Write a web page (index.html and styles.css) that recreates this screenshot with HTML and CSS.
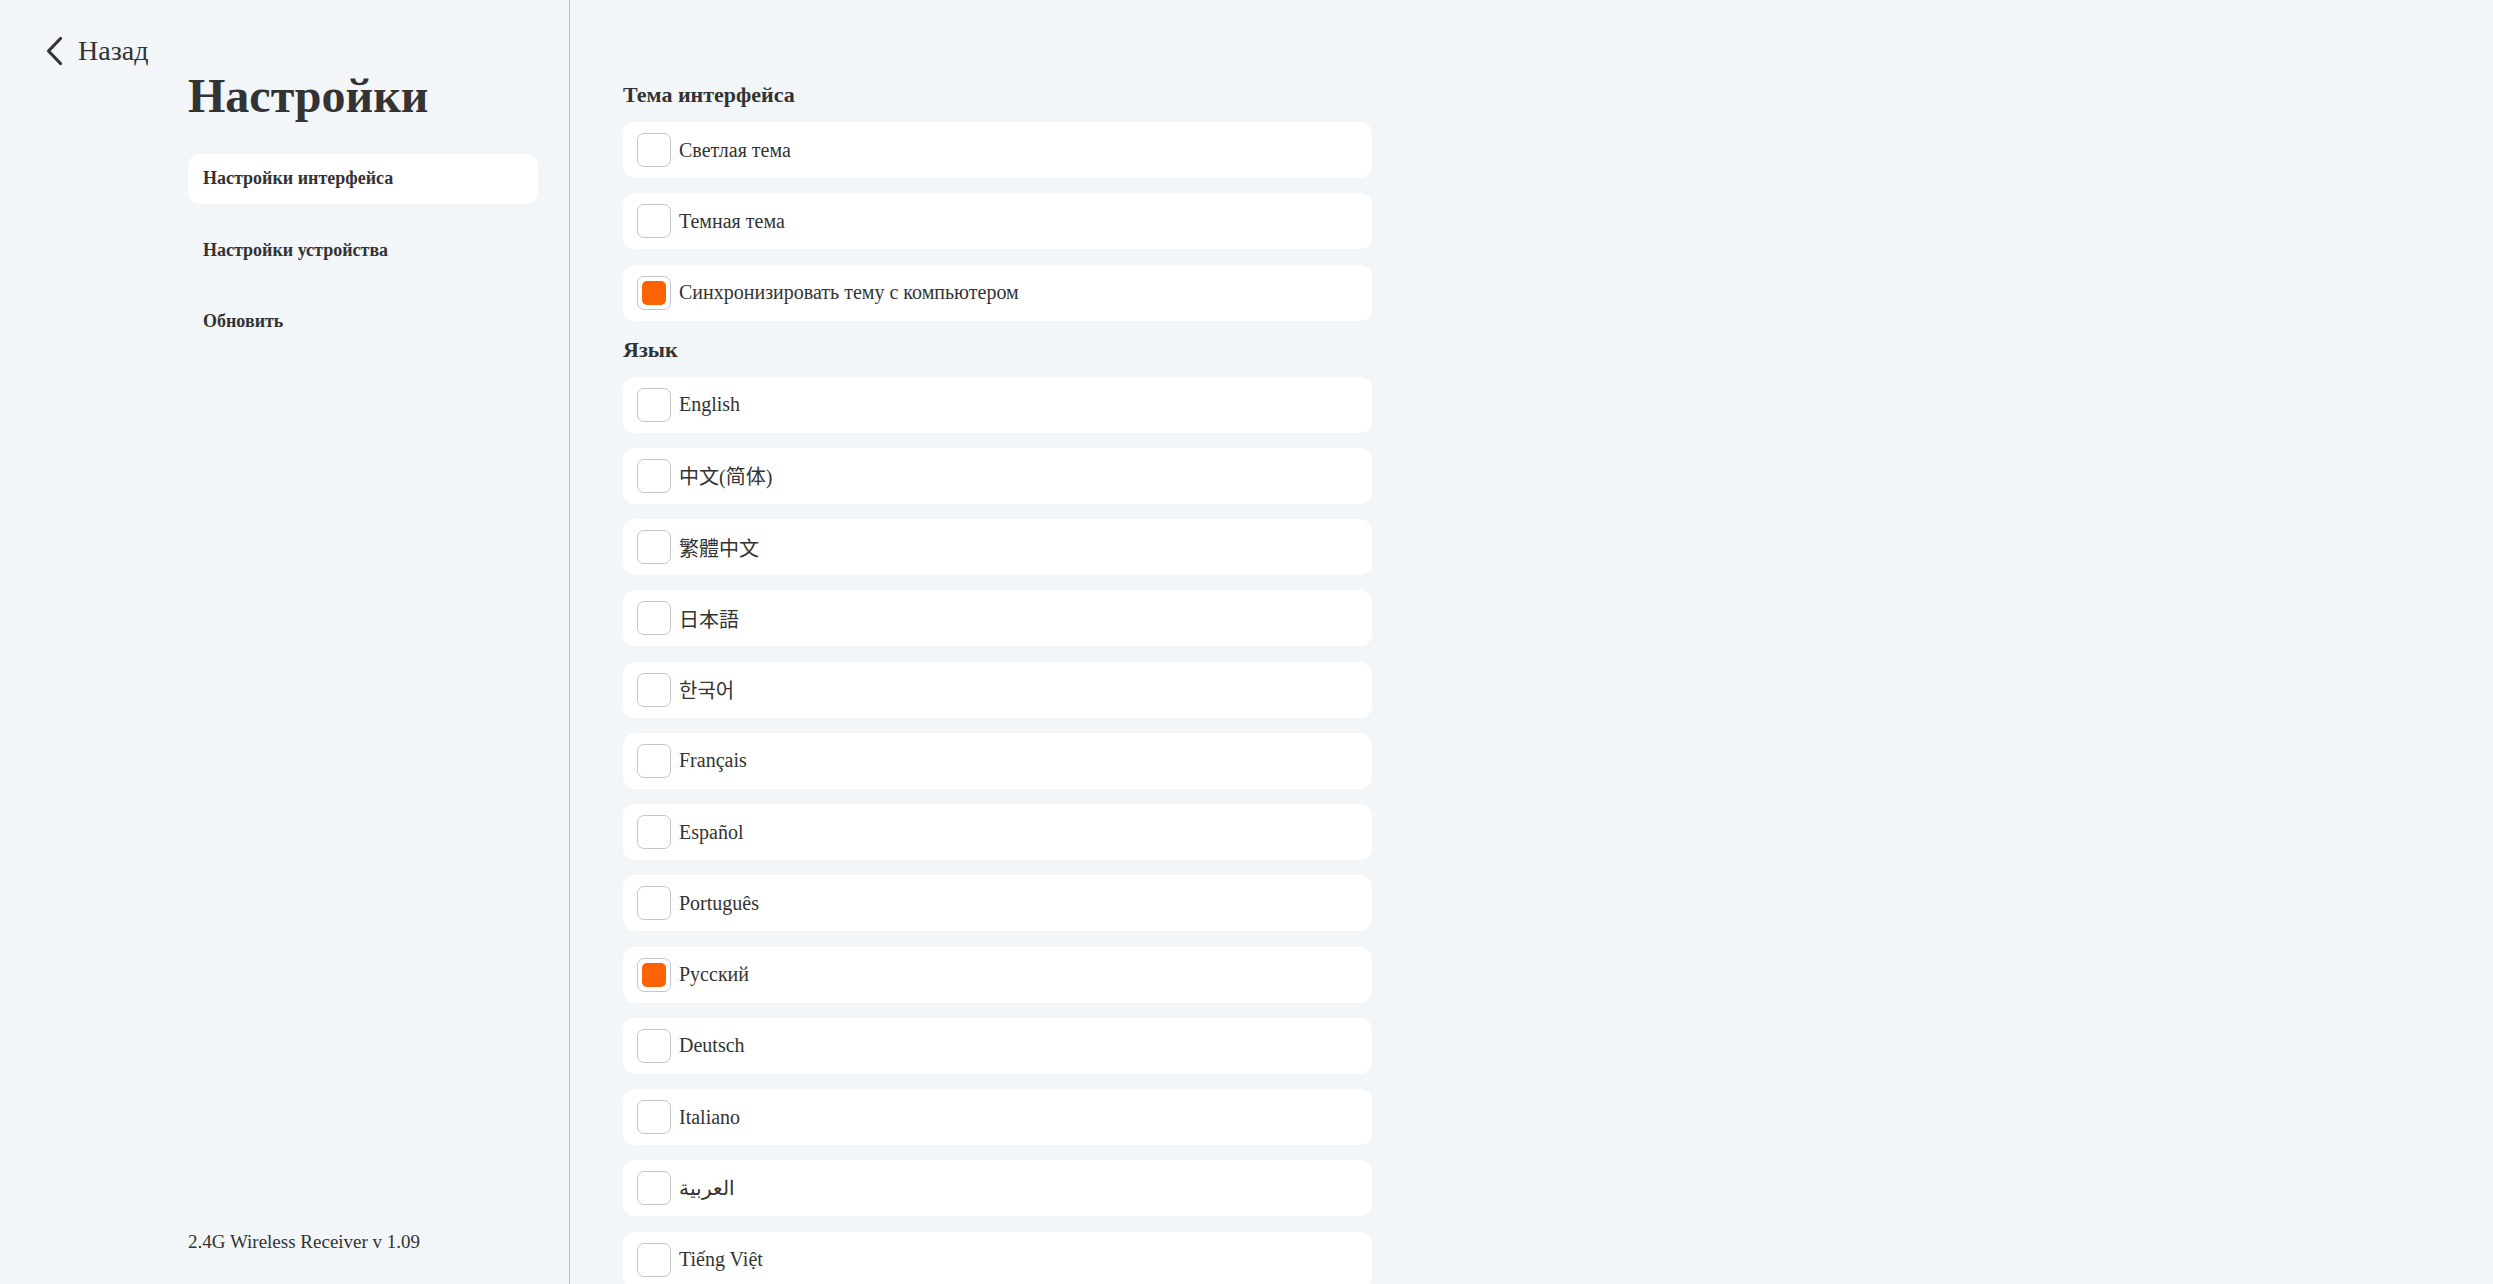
FILE: index.html
```html
<!DOCTYPE html>
<html lang="ru">
<head>
  <meta charset="UTF-8" />
  <meta name="viewport" content="width=device-width, initial-scale=1.0"/>
  <title>Настройки</title>
  <link rel="stylesheet" href="styles.css">
</head>
<body>

<div class="app">

  <!-- left column: back link, page title, section menu, version -->
  <aside class="sidebar">
    <a class="back" href="#">
      <svg class="back-icon" width="18" height="32" viewBox="0 0 18 32">
        <polyline points="14.5,3.5 2.5,16 14.5,28.5" fill="none" stroke="#333" stroke-width="3.2" stroke-linecap="round" stroke-linejoin="round"/>
      </svg>
      <span>Назад</span>
    </a>

    <div class="side-body">
      <h1 class="page-title">Настройки</h1>
      <nav class="side-menu">
        <a class="side-item active" href="#">Настройки интерфейса</a>
        <a class="side-item" href="#">Настройки устройства</a>
        <a class="side-item" href="#">Обновить</a>
      </nav>
    </div>

    <div class="version">2.4G Wireless Receiver v 1.09</div>
  </aside>

  <!-- settings list -->
  <main class="content">
    <section class="group">
      <h2 class="group-title">Тема интерфейса</h2>
      <div class="options">
        <label class="option"><span class="check"></span><span class="option-text">Светлая тема</span></label>
        <label class="option"><span class="check"></span><span class="option-text">Темная тема</span></label>
        <label class="option checked"><span class="check"></span><span class="option-text">Синхронизировать тему с компьютером</span></label>
      </div>
    </section>

    <section class="group">
      <h2 class="group-title">Язык</h2>
      <div class="options">
        <label class="option"><span class="check"></span><span class="option-text">English</span></label>
        <label class="option"><span class="check"></span><span class="option-text" lang="zh-CN">中文(简体)</span></label>
        <label class="option"><span class="check"></span><span class="option-text" lang="zh-TW">繁體中文</span></label>
        <label class="option"><span class="check"></span><span class="option-text" lang="ja">日本語</span></label>
        <label class="option"><span class="check"></span><span class="option-text" lang="ko">한국어</span></label>
        <label class="option"><span class="check"></span><span class="option-text">Français</span></label>
        <label class="option"><span class="check"></span><span class="option-text">Español</span></label>
        <label class="option"><span class="check"></span><span class="option-text">Português</span></label>
        <label class="option checked"><span class="check"></span><span class="option-text">Русский</span></label>
        <label class="option"><span class="check"></span><span class="option-text">Deutsch</span></label>
        <label class="option"><span class="check"></span><span class="option-text">Italiano</span></label>
        <label class="option"><span class="check"></span><span class="option-text" lang="ar">العربية</span></label>
        <label class="option"><span class="check"></span><span class="option-text">Tiếng Việt</span></label>
      </div>
    </section>
  </main>

</div>

</body>
</html>
```

FILE: styles.css
```css
:root {
  --bg: #f2f6f9;
  --card: #ffffff;
  --text: #333333;
  --line: #bcc2cb;
  --box-border: #c6c6c6;
  --accent: #ff6200;
}

body {
  margin: 0;
  background: var(--bg);
  color: var(--text);
  font-family: "Liberation Serif", "Noto Sans CJK SC", serif;
}

.app {
  display: flex;
  height: 100vh;
  overflow: hidden;
}

/* sidebar */

.sidebar {
  width: 570px;
  flex-shrink: 0;
  box-sizing: border-box;
  border-right: 1px solid var(--line);
  display: flex;
  flex-direction: column;
  padding: 34.5px 0 31px;
}

.back {
  display: flex;
  align-items: center;
  gap: 14px;
  height: 32px;
  margin-left: 46px;
  font-size: 28px;
  line-height: 32px;
  color: var(--text);
  text-decoration: none;
}

.side-body {
  margin-left: 188px;
  width: 350px;
}

.page-title {
  margin: 1.3px 0 30px;
  font-size: 48px;
  line-height: 56px;
  font-weight: bold;
}

.side-menu {
  display: flex;
  flex-direction: column;
  gap: 21.5px;
}

.side-item {
  display: flex;
  align-items: center;
  height: 50px;
  padding: 0 15px;
  border-radius: 12px;
  font-size: 18px;
  font-weight: bold;
  color: var(--text);
  text-decoration: none;
}

.side-item.active {
  background: var(--card);
}

.version {
  margin-top: auto;
  margin-left: 188px;
  font-size: 19px;
  line-height: 22px;
}

/* main list */

.content {
  flex: 1;
  padding: 66px 0 0 53px;
  overflow-y: auto;
  scrollbar-width: none;
}

.group-title {
  margin: 14px 0 12px;
  font-size: 22px;
  line-height: 30px;
  font-weight: bold;
}

.options {
  display: flex;
  flex-direction: column;
  gap: 15.25px;
  width: 749px;
}

.option {
  display: flex;
  align-items: center;
  gap: 8px;
  height: 56px;
  padding-left: 14px;
  background: var(--card);
  border-radius: 12px;
  font-size: 20px;
  cursor: pointer;
}

.check {
  position: relative;
  width: 34px;
  height: 34px;
  box-sizing: border-box;
  border: 1px solid var(--box-border);
  border-radius: 7px;
  flex-shrink: 0;
}

.option.checked .check::after {
  content: "";
  position: absolute;
  inset: 4px;
  border-radius: 5px;
  background: var(--accent);
}
```
